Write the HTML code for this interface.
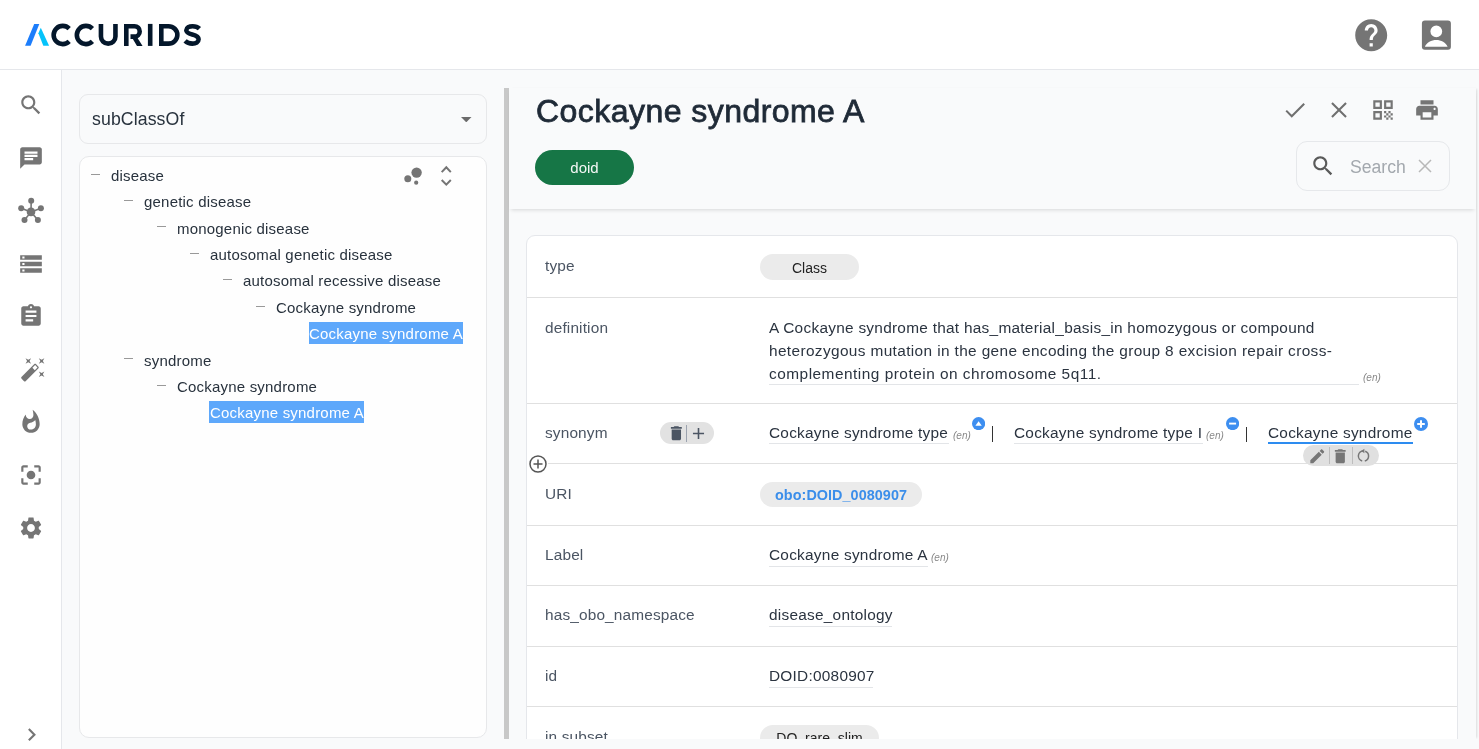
<!DOCTYPE html>
<html><head><meta charset="utf-8">
<style>
*{box-sizing:border-box;margin:0;padding:0}
html,body{width:1479px;height:749px;overflow:hidden;background:#f9fafb;font-family:"Liberation Sans",sans-serif;}
.abs{position:absolute}
.tr,.val,.lbl,.title,.en,.gchip,.chip-g,.abs{will-change:transform}
.ic{position:absolute;fill:#757575}
#hdr{position:absolute;left:0;top:0;width:1479px;height:70px;background:#fff;border-bottom:1px solid #e5e7eb}
#side{position:absolute;left:0;top:70px;width:62px;height:679px;background:#fff;border-right:1px solid #e5e7eb}
.sel{position:absolute;left:79px;top:94px;width:408px;height:50px;border:1px solid #e7e8ea;border-radius:9px;background:#f9fafb}
.tree{position:absolute;left:79px;top:156px;width:408px;height:582px;border:1px solid #e7e8ea;border-radius:10px;background:#fefefe}
.tr{position:absolute;font-size:15px;letter-spacing:0.2px;color:#28323d;white-space:nowrap;line-height:18px}
.dash{position:absolute;width:9px;height:1px;background:#999}
.hl{position:absolute;background:#5ea8fb;height:21.5px}
.tw{color:#fff}
#split{position:absolute;left:504px;top:88px;width:5px;height:651px;background:#c8c8c8}
#rp{position:absolute;left:509px;top:88px;width:967px;height:651px;background:#f9fafb;box-shadow:2px 0 2px -1px rgba(0,0,0,0.12)}
#rhead{position:absolute;left:509px;top:88px;width:967px;height:121px;background:#f9fafb;box-shadow:0 3px 4px -2px rgba(0,0,0,0.14)}
.title{position:absolute;left:535.5px;top:92px;font-size:32px;letter-spacing:0.45px;color:#1f2a37;-webkit-text-stroke:0.8px #1f2a37;white-space:nowrap;line-height:38px}
.chip-g{position:absolute;left:535px;top:150px;width:99px;height:35px;border-radius:18px;background:#167646;color:#f4f7f5;font-size:15px;text-align:center;line-height:35px}
.srch{position:absolute;left:1296px;top:141px;width:154px;height:50px;border:1px solid #e6e8eb;border-radius:11px;background:#f9fafb}
.card{position:absolute;left:526px;top:235px;width:932px;height:520px;border:1px solid #e5e7eb;border-radius:9px;background:#fff}
.sep{position:absolute;left:527px;width:930px;height:1px;background:#e0e0e0}
.lbl{position:absolute;left:545px;font-size:15.4px;letter-spacing:0.15px;color:#4b5563;white-space:nowrap;line-height:18px}
.val{position:absolute;font-size:15.4px;letter-spacing:0.25px;color:#2b3440;white-space:nowrap;line-height:18px}
.ul{position:absolute;height:1px;background:#e3e5e8}
.en{position:absolute;font-size:10px;font-style:italic;color:#8a8a8a;white-space:nowrap;line-height:12px}
.gchip{position:absolute;background:#ebebeb;border-radius:13px;text-align:center;color:#222;font-size:14px}
#clipb{position:absolute;left:509px;top:739px;width:970px;height:10px;background:#f9fafb}
</style></head><body>

<div id="hdr"></div>
<!-- logo -->
<svg class="abs" style="left:0;top:0" width="220" height="70" viewBox="0 0 220 70">
  <polygon points="25.1,45.8 34.2,24.1 39.3,24.1 30.6,45.8" fill="#1c7dfb"/>
  <polygon points="38.4,33.3 40.8,27.8 49.1,45.8 43.3,45.8" fill="#05c3fb"/>
  <g fill="none" stroke="#04172b" stroke-width="4.6">
    <path d="M69.2,28.6 A9.1,9.1 0 1 0 69.2,41.4"/>
    <path d="M92.4,28.6 A9.1,9.1 0 1 0 92.4,41.4"/>
    <path d="M100.95,23.9 V36.4 A7.25,7.25 0 0 0 115.45,36.4 V23.9"/>
    <path d="M126.3,45.9 V26.2 H134.5 A5.2,5.2 0 0 1 134.5,36.6 H130.5"/>
    <path d="M150.2,23.9 V45.9"/>
    <path d="M161.3,45.9 V26.2 H168.5 A8.75,8.6 0 0 1 168.5,43.6 H161.3"/>
    <path d="M199.4,28.6 C197.7,26.9 195.1,26.2 192.6,26.2 C189.2,26.2 186.3,27.6 186.3,30.3 C186.3,35.8 198.6,33.2 198.6,39.3 C198.6,42.1 195.8,43.6 192.4,43.6 C189.6,43.6 186.9,42.7 185.1,40.9"/>
  </g>
  <polygon points="131.2,36.2 136.4,36.2 142.6,45.9 137,45.9" fill="#04172b"/>
</svg>
<!-- help / account -->
<svg class="ic" style="left:1352px;top:15.8px" width="38.4" height="38.4" viewBox="0 0 24 24"><path d="M12 2C6.48 2 2 6.48 2 12s4.48 10 10 10 10-4.48 10-10S17.52 2 12 2zm1 17h-2v-2h2v2zm2.07-7.75l-.9.92C13.45 12.9 13 13.5 13 15h-2v-.5c0-1.1.45-2.1 1.17-2.83l1.24-1.26c.37-.36.59-.86.59-1.41 0-1.1-.9-2-2-2s-2 .9-2 2H8c0-2.21 1.79-4 4-4s4 1.79 4 4c0 .88-.36 1.68-.93 2.25z"/></svg>
<svg class="ic" style="left:1415px;top:15px" width="42" height="42" viewBox="1415 15 42 42"><path fill-rule="evenodd" d="M1424.9,20.5 H1447.9 A3,3 0 0 1 1450.9,23.5 V46.8 A3,3 0 0 1 1447.9,49.8 H1424.9 A3,3 0 0 1 1421.9,46.8 V23.5 A3,3 0 0 1 1424.9,20.5 Z M1436.3,25.4 A5.9,5.9 0 1 0 1436.3,37.2 A5.9,5.9 0 1 0 1436.3,25.4 Z M1424.9,46.7 C1426.5,42.3 1431.5,39.9 1436.25,39.9 C1441,39.9 1446,42.3 1447.6,46.7 Z"/></svg>

<div id="side"></div>
<!-- sidebar icons, 26px centered at x=31 -->
<svg class="ic" style="left:18px;top:92px" width="26" height="26" viewBox="0 0 24 24"><path d="M15.5 14h-.79l-.28-.27C15.41 12.59 16 11.110 16 9.5 16 5.91 13.09 3 9.5 3S3 5.91 3 9.5 5.91 16 9.5 16c1.61 0 3.09-.59 4.23-1.57l.27.28v.79l5 4.99L20.49 19l-4.99-5zm-6 0C7.01 14 5 11.99 5 9.5S7.01 5 9.5 5 14 7.01 14 9.5 11.99 14 9.5 14z"/></svg>
<svg class="ic" style="left:18px;top:145px" width="26" height="26" viewBox="0 0 24 24"><path d="M20 2H4c-1.1 0-1.99.9-1.99 2L2 22l4-4h14c1.1 0 2-.9 2-2V4c0-1.1-.9-2-2-2zM6 9h12v2H6V9zm8 5H6v-2h8v2zm4-6H6V6h12v2z"/></svg>
<svg class="ic" style="left:15px;top:195px" width="32" height="32" viewBox="15 195 32 32"><g stroke="#757575" stroke-width="1.6"><line x1="31" y1="211.9" x2="31.2" y2="200.8"/><line x1="31" y1="211.9" x2="21.2" y2="208.3"/><line x1="31" y1="211.9" x2="40.9" y2="208.3"/><line x1="31" y1="211.9" x2="24.5" y2="220"/><line x1="31" y1="211.9" x2="37.9" y2="220"/></g><circle cx="31" cy="211.9" r="4.3"/><circle cx="31.2" cy="200.8" r="3"/><circle cx="21.2" cy="208.3" r="3"/><circle cx="40.9" cy="208.3" r="3"/><circle cx="24.5" cy="220" r="3"/><circle cx="37.9" cy="220" r="3"/></svg>
<svg class="ic" style="left:18px;top:251px" width="26" height="26" viewBox="0 0 24 24"><path d="M2 20h20v-4H2v4zm2-3h2v2H4v-2zM2 4v4h20V4H2zm4 3H4V5h2v2zm-4 7h20v-4H2v4zm2-3h2v2H4v-2z"/></svg>
<svg class="ic" style="left:18px;top:303px" width="26" height="26" viewBox="0 0 24 24"><path d="M19 3h-4.18C14.4 1.84 13.3 1 12 1c-1.3 0-2.4.84-2.82 2H5c-1.1 0-2 .9-2 2v14c0 1.1.9 2 2 2h14c1.1 0 2-.9 2-2V5c0-1.1-.9-2-2-2zm-7 0c.55 0 1 .45 1 1s-.45 1-1 1-1-.45-1-1 .45-1 1-1zm2 14H7v-2h7v2zm3-4H7v-2h10v2zm0-4H7V7h10v2z"/></svg>
<svg class="ic" style="left:19.7px;top:355.7px" width="26.6" height="26.6" viewBox="0 0 24 24"><path d="M7.5 5.6L10 7 8.6 4.5 10 2 7.5 3.4 5 2l1.4 2.5L5 7zm12 9.8L17 14l1.4 2.5L17 19l2.5-1.4L22 19l-1.4-2.5L22 14zM22 2l-2.5 1.4L17 2l1.4 2.5L17 7l2.5-1.4L22 7l-1.4-2.5zm-7.63 5.29c-.39-.39-1.02-.39-1.41 0L1.29 18.96c-.39.39-.39 1.02 0 1.41l2.34 2.34c.39.39 1.02.39 1.41 0L16.7 11.05c.39-.39.39-1.02 0-1.41l-2.33-2.35zm-1.03 5.49l-2.12-2.12 2.44-2.44 2.12 2.12-2.44 2.44z"/></svg>
<svg class="ic" style="left:18px;top:409px" width="26" height="26" viewBox="0 0 24 24"><path d="M13.5.67s.74 2.65.74 4.8c0 2.06-1.35 3.73-3.41 3.73-2.07 0-3.630-1.67-3.63-3.73l.03-.36C5.21 7.51 4 10.62 4 14c0 4.42 3.58 8 8 8s8-3.58 8-8C20 8.61 17.41 3.8 13.5.67zM11.71 19c-1.78 0-3.22-1.4-3.22-3.14 0-1.62 1.05-2.76 2.81-3.12 1.77-.36 3.6-1.21 4.62-2.58.39 1.29.59 2.65.59 4.04 0 2.65-2.150 4.8-4.8 4.8z"/></svg>
<svg class="ic" style="left:18px;top:462px" width="26" height="26" viewBox="0 0 24 24"><path d="M12 8c-2.21 0-4 1.79-4 4s1.79 4 4 4 4-1.79 4-4-1.79-4-4-4zm-7 7H3v4c0 1.1.9 2 2 2h4v-2H5v-4zM5 5h4V3H5c-1.1 0-2 .9-2 2v4h2V5zm14-2h-4v2h4v4h2V5c0-1.1-.9-2-2-2zm0 16h-4v2h4c1.1 0 2-.9 2-2v-4h-2v4z"/></svg>
<svg class="ic" style="left:18px;top:515px" width="26" height="26" viewBox="0 0 24 24"><path d="M19.14 12.94c.04-.3.06-.61.06-.94 0-.32-.02-.64-.07-.94l2.03-1.58c.18-.14.23-.41.12-.61l-1.92-3.32c-.12-.22-.37-.29-.59-.22l-2.39.96c-.5-.38-1.03-.7-1.62-.94l-.36-2.54c-.04-.24-.24-.41-.48-.41h-3.84c-.24 0-.43.17-.47.41l-.36 2.54c-.59.24-1.13.57-1.62.94l-2.39-.96c-.22-.08-.47 0-.59.22L2.74 8.87c-.12.21-.08.47.12.61l2.03 1.58c-.05.3-.09.63-.09.94s.02.64.07.94l-2.03 1.58c-.18.14-.23.41-.12.61l1.92 3.32c.12.22.37.29.59.22l2.39-.96c.5.38 1.03.7 1.62.94l.36 2.54c.05.24.24.41.48.41h3.840c.24 0 .44-.17.47-.41l.36-2.54c.59-.24 1.13-.56 1.62-.94l2.39.96c.22.08.47 0 .59-.22l1.92-3.32c.12-.22.07-.47-.12-.61l-2.01-1.58zM12 15.6c-1.98 0-3.6-1.62-3.6-3.6s1.62-3.6 3.6-3.6 3.6 1.62 3.6 3.6-1.62 3.6-3.6 3.6z"/></svg>
<svg class="ic" style="left:18.5px;top:721.5px" width="25.4" height="25.4" viewBox="0 0 24 24"><path d="M10 6L8.59 7.41 13.17 12l-4.58 4.59L10 18l6-6z"/></svg>

<!-- left panel -->
<div class="sel"></div>
<div class="tr" style="left:91.5px;top:109.7px;font-size:17.7px;letter-spacing:0.1px">subClassOf</div>
<svg class="abs" style="left:460.9px;top:117px" width="10.5" height="5.3" viewBox="0 0 10.5 5.3"><path d="M0 0h10.5L5.25 5.3z" fill="#6b6b6b"/></svg>
<div class="tree"></div>
<svg class="abs" style="left:400px;top:162px" width="60" height="30" viewBox="400 162 60 30">
  <g fill="#757575"><circle cx="416.6" cy="172.6" r="5.2"/><circle cx="407.8" cy="178.8" r="3.5"/><circle cx="416.2" cy="182.7" r="2.1"/></g>
  <g fill="none" stroke="#757575" stroke-width="2"><path d="M441.7,172.1 L446.3,167.3 L450.8,172.1"/><path d="M441.7,180 L446.3,184.6 L450.8,180"/></g>
</svg>
<!--TREE-->
<div class="dash" style="left:91.2px;top:173.5px"></div>
<div class="tr" style="left:111.0px;top:166.7px">disease</div>
<div class="dash" style="left:124.3px;top:199.9px"></div>
<div class="tr" style="left:144.1px;top:193.1px">genetic disease</div>
<div class="dash" style="left:157.3px;top:226.3px"></div>
<div class="tr" style="left:177.1px;top:219.5px">monogenic disease</div>
<div class="dash" style="left:190.3px;top:252.7px"></div>
<div class="tr" style="left:210.1px;top:245.9px">autosomal genetic disease</div>
<div class="dash" style="left:223.4px;top:279.1px"></div>
<div class="tr" style="left:243.2px;top:272.3px">autosomal recessive disease</div>
<div class="dash" style="left:256.4px;top:305.5px"></div>
<div class="tr" style="left:276.2px;top:298.7px">Cockayne syndrome</div>
<div class="hl" style="left:308.6px;top:322.1px;width:154.2px"></div>
<div class="tr tw" style="left:309.3px;top:325.1px;width:153.5px;overflow:hidden">Cockayne syndrome A</div>
<div class="dash" style="left:124.3px;top:358.3px"></div>
<div class="tr" style="left:144.1px;top:351.5px">syndrome</div>
<div class="dash" style="left:157.3px;top:384.7px"></div>
<div class="tr" style="left:177.1px;top:377.9px">Cockayne syndrome</div>
<div class="hl" style="left:209.4px;top:401.3px;width:154.2px"></div>
<div class="tr tw" style="left:210.1px;top:404.3px;width:153.5px;overflow:hidden">Cockayne syndrome A</div>
<!--/TREE-->

<div id="split"></div>
<div id="rp"></div>
<div id="rhead"></div>
<div class="title">Cockayne syndrome A</div>
<div class="chip-g">doid</div>
<!-- header actions -->
<svg class="abs" style="left:1282px;top:97px" width="26" height="26" viewBox="0 0 24 24"><path d="M3.9 12.6 L9 17.8 L20.5 6.3" fill="none" stroke="#6f6f6f" stroke-width="1.9"/></svg>
<svg class="abs" style="left:1326px;top:97px" width="26" height="26" viewBox="0 0 24 24"><path d="M5.5 5.5 L18.5 18.5 M18.5 5.5 L5.5 18.5" fill="none" stroke="#6f6f6f" stroke-width="1.9"/></svg>
<svg class="ic" style="left:1370px;top:97px" width="26" height="26" viewBox="0 0 24 24" style="fill:#6f6f6f"><path d="M3 11h8V3H3v8zm2-6h4v4H5V5zM3 21h8v-8H3v8zm2-6h4v4H5v-4zM13 3v8h8V3h-8zm6 6h-4V5h4v4zM19 19h2v2h-2zM13 13h2v2h-2zM15 15h2v2h-2zM13 17h2v2h-2zM15 19h2v2h-2zM17 17h2v2h-2zM17 13h2v2h-2zM19 15h2v2h-2z"/></svg>
<svg class="ic" style="left:1414px;top:97px" width="26" height="26" viewBox="0 0 24 24"><path d="M19 8H5c-1.66 0-3 1.34-3 3v6h4v4h12v-4h4v-6c0-1.66-1.34-3-3-3zm-3 11H8v-5h8v5zm3-7c-.55 0-1-.45-1-1s.45-1 1-1 1 .45 1 1-.45 1-1 1zm1-9H6v4h12V3z"/></svg>
<div class="srch"></div>
<svg class="abs" style="left:1310px;top:153px" width="26" height="26" viewBox="0 0 24 24"><path fill="#5a5a5a" d="M15.5 14h-.79l-.28-.27C15.41 12.59 16 11.11 16 9.5 16 5.91 13.09 3 9.5 3S3 5.91 3 9.5 5.91 16 9.5 16c1.61 0 3.09-.59 4.23-1.57l.27.28v.79l5 4.99L20.49 19l-4.99-5zm-6 0C7.01 14 5 11.99 5 9.5S7.01 5 9.5 5 14 7.01 14 9.5 11.99 14 9.5 14z"/></svg>
<div class="abs" style="left:1349.5px;top:156.5px;font-size:17.6px;color:#a3a8ae;line-height:20px">Search</div>
<svg class="abs" style="left:1418px;top:159px" width="14" height="14" viewBox="0 0 14 14"><path d="M1 1L13 13M13 1L1 13" stroke="#b8b8b8" stroke-width="1.5"/></svg>

<!-- content card -->
<div class="card"></div>
<!--ROWS-->
<div class="sep" style="top:297px"></div>
<div class="sep" style="top:403px"></div>
<div class="sep" style="top:463px;left:548px;width:909px"></div>
<div class="sep" style="top:525px"></div>
<div class="sep" style="top:585px"></div>
<div class="sep" style="top:646px"></div>
<div class="sep" style="top:706px"></div>
<div class="lbl" style="top:256.7px">type</div>
<div class="lbl" style="top:318.7px">definition</div>
<div class="lbl" style="top:423.6px">synonym</div>
<div class="lbl" style="top:484.5px">URI</div>
<div class="lbl" style="top:545.6px">Label</div>
<div class="lbl" style="top:606.3px">has_obo_namespace</div>
<div class="lbl" style="top:666.7px">id</div>
<div class="lbl" style="top:728.0px">in subset</div>
<div class="gchip" style="left:760px;top:254px;width:99px;height:26px;line-height:26px;padding-top:1px;font-size:14px">Class</div>
<div class="val" style="left:769px;top:318.7px;letter-spacing:0.27px">A Cockayne syndrome that has_material_basis_in homozygous or compound</div>
<div class="val" style="left:769px;top:341.5px;letter-spacing:0.37px">heterozygous mutation in the gene encoding the group 8 excision repair cross-</div>
<div class="val" style="left:769px;top:364.5px;letter-spacing:0.5px">complementing protein on chromosome 5q11.</div>
<div class="ul" style="left:769px;top:384px;width:590px"></div>
<div class="en" style="left:1363px;top:371.5px">(en)</div>
<div class="gchip" style="left:660px;top:422px;width:54px;height:22px;background:#e2e2e2;border-radius:11px"></div>
<svg class="abs" style="left:666.6px;top:423.7px" width="18.7" height="18.7" viewBox="0 0 24 24"><path fill="#4b5563" d="M6 19c0 1.1.9 2 2 2h8c1.1 0 2-.9 2-2V7H6v12zM19 4h-3.5l-1-1h-5l-1 1H5v2h14V4z"/></svg>
<div class="abs" style="left:686.2px;top:425px;width:1px;height:17px;background:#9ca3af"></div>
<svg class="abs" style="left:689.3px;top:423.5px" width="19" height="19" viewBox="0 0 24 24"><path fill="#4b5563" d="M19 13h-6v6h-2v-6H5v-2h6V5h2v6h6v2z"/></svg>
<svg class="abs" style="left:528px;top:454px" width="20" height="20" viewBox="0 0 20 20"><circle cx="10" cy="10" r="9.5" fill="#fff"/><circle cx="10" cy="10" r="8" fill="none" stroke="#555" stroke-width="1.5"/><path d="M10 5.5v9M5.5 10h9" stroke="#555" stroke-width="1.5"/></svg>
<div class="val" style="left:769px;top:423.5px">Cockayne syndrome type</div>
<div class="ul" style="left:769px;top:443px;width:180px"></div>
<div class="en" style="left:953px;top:429.7px">(en)</div>
<svg class="abs" style="left:971.8px;top:416.7px" width="13.2" height="13.2" viewBox="0 0 14 14"><circle cx="7" cy="7" r="7" fill="#3d8ef0"/><path d="M3.6 9.2h6.8L7 4.6z" fill="#fff"/></svg>
<div class="abs" style="left:991.9px;top:426.3px;width:1.3px;height:15.5px;background:#333"></div>
<div class="val" style="left:1014.4px;top:423.5px">Cockayne syndrome type I</div>
<div class="ul" style="left:1014px;top:443px;width:189px"></div>
<div class="en" style="left:1206.2px;top:429.7px">(en)</div>
<svg class="abs" style="left:1226.2px;top:416.7px" width="13.2" height="13.2" viewBox="0 0 14 14"><circle cx="7" cy="7" r="7" fill="#3d8ef0"/><rect x="3.3" y="6" width="7.4" height="2" fill="#fff"/></svg>
<div class="abs" style="left:1245.6px;top:426.7px;width:1.3px;height:15.2px;background:#333"></div>
<div class="val" style="left:1268.3px;top:423.5px">Cockayne syndrome</div>
<div class="abs" style="left:1268px;top:442px;width:145px;height:2px;background:#2d8cf0"></div>
<svg class="abs" style="left:1414px;top:416.6px" width="14" height="14" viewBox="0 0 14 14"><circle cx="7" cy="7" r="7" fill="#3d8ef0"/><path d="M7 3.2v7.6M3.2 7h7.6" stroke="#fff" stroke-width="2"/></svg>
<div class="abs" style="left:1302.8px;top:444.5px;width:75.6px;height:21.3px;border-radius:10.7px;background:#e0e0e0"></div>
<svg class="abs" style="left:1308.2px;top:446.6px" width="18.5" height="18.5" viewBox="0 0 24 24"><path fill="#767676" d="M3 17.25V21h3.75L17.81 9.94l-3.75-3.75L3 17.25zM20.71 7.04c.39-.39.39-1.02 0-1.41l-2.34-2.34c-.39-.39-1.02-.39-1.41 0l-1.83 1.83 3.75 3.75 1.83-1.83z"/></svg>
<div class="abs" style="left:1328.7px;top:447px;width:1px;height:16.6px;background:#bdbdbd"></div>
<svg class="abs" style="left:1331px;top:446.9px" width="18.5" height="18.5" viewBox="0 0 24 24"><path fill="#767676" d="M6 19c0 1.1.9 2 2 2h8c1.1 0 2-.9 2-2V7H6v12zM19 4h-3.5l-1-1h-5l-1 1H5v2h14V4z"/></svg>
<div class="abs" style="left:1351.6px;top:447px;width:1px;height:16.6px;background:#bdbdbd"></div>
<svg class="abs" style="left:1355px;top:447px" width="17" height="17" viewBox="1355 447 17 17"><path d="M1362.2,460.9 A5.05,5.05 0 0 1 1363.5,450.95" fill="none" stroke="#767676" stroke-width="1.5"/><path d="M1365.2,451.25 A5.05,5.05 0 0 1 1364.8,460.9" fill="none" stroke="#767676" stroke-width="1.5"/><path d="M1361.2,450.95 L1364.4,448.7 L1364.4,453.2 Z" fill="#767676"/></svg>
<div class="gchip" style="left:760px;top:482px;width:162px;height:25px;line-height:26px;color:#3b8eea;font-weight:bold;font-size:14.4px;letter-spacing:0.05px">obo:DOID_0080907</div>
<div class="val" style="left:769px;top:545.6px">Cockayne syndrome A</div>
<div class="ul" style="left:769px;top:566px;width:159px"></div>
<div class="en" style="left:931px;top:551.5px">(en)</div>
<div class="val" style="left:769px;top:606.3px">disease_ontology</div>
<div class="ul" style="left:769px;top:626px;width:123px"></div>
<div class="val" style="left:769px;top:666.7px">DOID:0080907</div>
<div class="ul" style="left:769px;top:687px;width:104px"></div>
<div class="gchip" style="left:760px;top:725px;width:119px;height:26px;line-height:26px;font-size:14px">DQ_rare_slim</div>
<!--/ROWS-->
<div id="clipb"></div>

</body></html>
